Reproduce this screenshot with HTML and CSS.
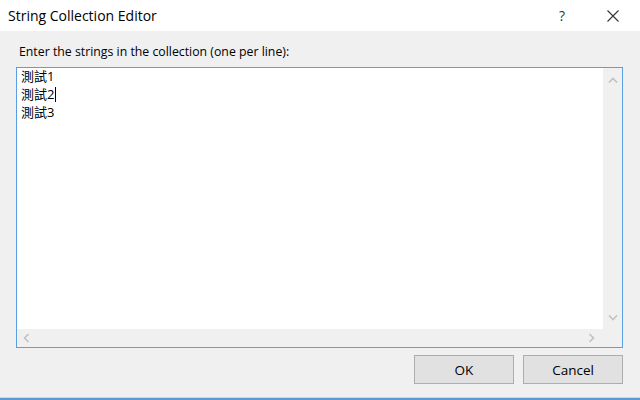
FILE: index.html
```html
<!DOCTYPE html>
<html lang="zh-Hant">
<head>
  <meta charset="UTF-8">
  <title>String Collection Editor</title>
  <link rel="stylesheet" href="styles.css">
</head>
<body>
  <div class="dialogo">
    <div class="titulo">
      <span class="titulo-texto">String Collection Editor</span>
      <span class="ajuda">?</span>
      <span class="fechar">
        <svg width="12" height="12" viewBox="0 0 12 12">
          <path d="M0.5 0.5 L11.5 11.5 M11.5 0.5 L0.5 11.5" stroke="#333" stroke-width="1.1" fill="none"/>
        </svg>
      </span>
    </div>

    <div class="corpo">
      <p class="rotulo">Enter the strings in the collection (one per line):</p>

      <div class="editor">
        <div class="area">
          <div class="linhas">
            <div>測試1</div>
            <div>測試2<span class="cursor"></span></div>
            <div>測試3</div>
          </div>
          <div class="rolagem-v">
            <svg width="10" height="6" viewBox="0 0 10 6"><path d="M1 5.5 L5 1.5 L9 5.5" stroke="#c2c2c2" stroke-width="1.6" fill="none"/></svg>
            <svg width="10" height="6" viewBox="0 0 10 6"><path d="M1 0.5 L5 4.5 L9 0.5" stroke="#c2c2c2" stroke-width="1.6" fill="none"/></svg>
          </div>
        </div>
        <div class="rolagem-h">
          <svg width="6" height="10" viewBox="0 0 6 10"><path d="M5.5 1 L1.5 5 L5.5 9" stroke="#c2c2c2" stroke-width="1.6" fill="none"/></svg>
          <svg width="6" height="10" viewBox="0 0 6 10"><path d="M0.5 1 L4.5 5 L0.5 9" stroke="#c2c2c2" stroke-width="1.6" fill="none"/></svg>
        </div>
      </div>

      <div class="botoes">
        <button>OK</button>
        <button>Cancel</button>
      </div>
    </div>
  </div>
</body>
</html>
```

FILE: styles.css
```css
* { margin: 0; padding: 0; box-sizing: border-box; }
body { font-family: "Open Sans", "Noto Sans CJK TC", sans-serif; background: #f0f0f0; color: #000; }

.dialogo { width: 640px; height: 400px; display: flex; flex-direction: column; background: #f0f0f0; border-bottom: 2px solid #5b9bd5; box-shadow: inset 0 -1px 0 #d6d6d6; }

.titulo { height: 31px; background: #fff; display: flex; align-items: center; padding-left: 8px; font-size: 14px; color: #000; }
.titulo-texto { flex: 1; }
.ajuda { width: 20px; text-align: center; font-size: 14px; color: #333; margin-right: 28px; }
.fechar { width: 40px; display: flex; justify-content: center; padding-right: 14px; }

.corpo { flex: 1; padding: 12px 17px 0 16px; display: flex; flex-direction: column; }
.rotulo { font-size: 12.3px; margin-left: 3px; height: 24px; }

.editor { width: 607px; height: 281px; border: 1px solid #5a9fe0; background: #fff; display: flex; flex-direction: column; }
.area { flex: 1; display: flex; }
.linhas { flex: 1; padding: 0 0 0 4px; font-size: 13px; line-height: 18px; color: #000; margin-top: -1px; }
.cursor { display: inline-block; width: 1px; height: 15px; background: #000; vertical-align: -3px; margin-left: 1px; }

.rolagem-v { width: 19px; background: #f0f0f0; display: flex; flex-direction: column; justify-content: space-between; align-items: center; padding: 9px 0 8px; }
.rolagem-h { height: 18px; background: #f0f0f0; display: flex; align-items: center; padding-left: 6px; }
.rolagem-h svg:nth-child(2) { margin-left: auto; margin-right: 27px; }

.botoes { display: flex; justify-content: flex-end; gap: 9px; margin-top: 7px; }
.botoes button { width: 100px; height: 29px; background: #e1e1e1; border: 1px solid #adadad; font-family: "Open Sans", sans-serif; font-size: 13.5px; color: #000; }
```
